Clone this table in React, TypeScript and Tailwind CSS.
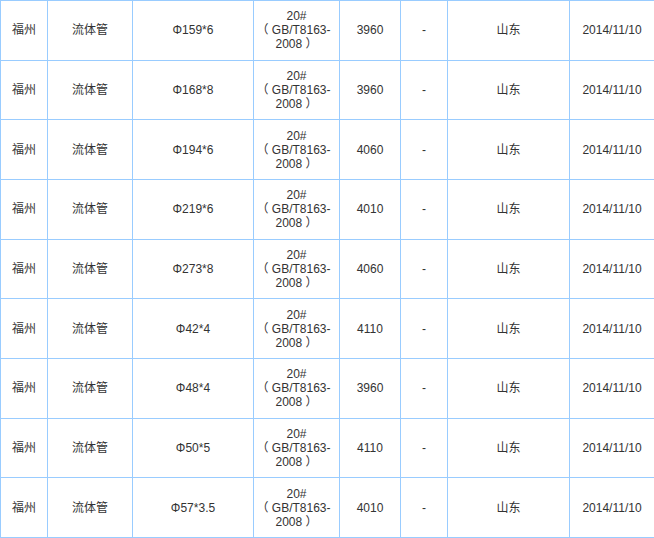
const rows = [
  ["Φ159*6", "3960"],
  ["Φ168*8", "3960"],
  ["Φ194*6", "4060"],
  ["Φ219*6", "4010"],
  ["Φ273*8", "4060"],
  ["Φ42*4", "4110"],
  ["Φ48*4", "3960"],
  ["Φ50*5", "4110"],
  ["Φ57*3.5", "4010"],
];

const widths = [47, 85, 121, 86, 61, 47, 122, 85];

export default function App() {
  return (
    <div className="w-[654px] h-[538px] overflow-hidden bg-white">
      <table
        className="border-collapse table-fixed w-[654px] h-[538px] text-[12px] leading-[14px] text-[#333]"
        style={{ fontFamily: '"Liberation Sans", "Noto Sans CJK SC", sans-serif' }}
      >
        <colgroup>
          {widths.map((w, i) => (
            <col key={i} style={{ width: w }} />
          ))}
        </colgroup>
        <tbody>
          {rows.map(([spec, price], i) => (
            <tr key={i}>
              <td className="border border-[#99ccff] text-center align-middle">福州</td>
              <td className="border border-[#99ccff] text-center align-middle">流体管</td>
              <td className="border border-[#99ccff] text-center align-middle">{spec}</td>
              <td className="border border-[#99ccff] text-center align-middle whitespace-pre">
                20#
                <br />
                <span className="-ml-[6px]">{"（ GB/T8163-"}</span>
                <br />
                {"2008 ）"}
              </td>
              <td className="border border-[#99ccff] text-center align-middle">{price}</td>
              <td className="border border-[#99ccff] text-center align-middle">-</td>
              <td className="border border-[#99ccff] text-center align-middle">山东</td>
              <td className="border border-[#99ccff] text-center align-middle">2014/11/10</td>
            </tr>
          ))}
        </tbody>
      </table>
    </div>
  );
}
